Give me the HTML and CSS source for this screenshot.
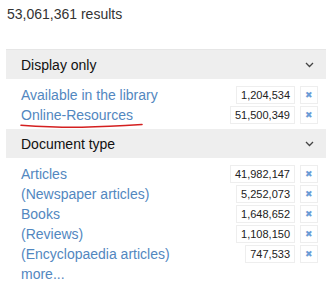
FILE: index.html
```html
<!DOCTYPE html>
<html>
<head>
    <title>Facets</title>
    <link rel="stylesheet" href="styles.css">
</head>
<body>
    <div class="result-count">53,061,361 results</div>

    <div class="facets">
        <div class="facet">
            <div class="facet-head">
                <span>Display only</span>
                <svg class="chevron" width="9" height="6" viewBox="0 0 9 6"><path d="M1 1 L4.5 4.5 L8 1" fill="none" stroke="#444" stroke-width="1.3"/></svg>
            </div>
            <ul class="facet-list">
                <li><a href="#">Available in the library</a><span class="count">1,204,534</span><span class="remove">&#10006;</span></li>
                <li>
                    <a href="#" class="marked">Online-Resources
                        <svg class="scribble" width="124" height="6" viewBox="0 0 124 6"><path d="M1 2.2 C20 3.5 40 4.6 62 4.2 C85 3.8 105 2.6 122 1.5" fill="none" stroke="#d42020" stroke-width="1.6" stroke-linecap="round"/></svg>
                    </a>
                    <span class="count">51,500,349</span><span class="remove">&#10006;</span>
                </li>
            </ul>
        </div>

        <div class="facet">
            <div class="facet-head">
                <span>Document type</span>
                <svg class="chevron" width="9" height="6" viewBox="0 0 9 6"><path d="M1 1 L4.5 4.5 L8 1" fill="none" stroke="#444" stroke-width="1.3"/></svg>
            </div>
            <ul class="facet-list">
                <li><a href="#">Articles</a><span class="count">41,982,147</span><span class="remove">&#10006;</span></li>
                <li><a href="#">(Newspaper articles)</a><span class="count">5,252,073</span><span class="remove">&#10006;</span></li>
                <li><a href="#">Books</a><span class="count">1,648,652</span><span class="remove">&#10006;</span></li>
                <li><a href="#">(Reviews)</a><span class="count">1,108,150</span><span class="remove">&#10006;</span></li>
                <li><a href="#">(Encyclopaedia articles)</a><span class="count">747,533</span><span class="remove">&#10006;</span></li>
                <li><a href="#">more...</a></li>
            </ul>
        </div>
    </div>
</body>
</html>
```

FILE: styles.css
```css
body {
    font-family: Arial, "Liberation Sans", sans-serif;
    margin: 0;
    padding: 0 0 0 6px;
    color: #333;
    background: #fff;
}
.result-count {
    font-size: 14px;
    padding: 6px 0 0 1px;
    height: 43px;
    border-bottom: 1px solid #e6e6e6;
}
.facet-head {
    background: #eeeeee;
    height: 29px;
    display: flex;
    align-items: center;
    justify-content: space-between;
    padding: 0 12px 0 15px;
    font-size: 14px;
    color: #111;
}
.facet-list {
    list-style: none;
    margin: 0;
    padding: 6px 8px 4px 15px;
}
.facet-list li {
    display: flex;
    align-items: center;
    height: 20px;
    font-size: 14px;
}
.facet-list a {
    color: #5287c0;
    text-decoration: none;
    flex: 1;
}
.marked {
    position: relative;
}
.scribble {
    position: absolute;
    left: -1px;
    top: 16px;
}
.count {
    font-size: 11px;
    color: #222;
    border: 1px solid #eee;
    padding: 1px 4px;
    line-height: 14px;
}
.remove {
    font-size: 9px;
    color: #6a9cd6;
    border: 1px solid #eee;
    width: 16px;
    height: 16px;
    line-height: 16px;
    text-align: center;
    margin-left: 5px;
}
```
